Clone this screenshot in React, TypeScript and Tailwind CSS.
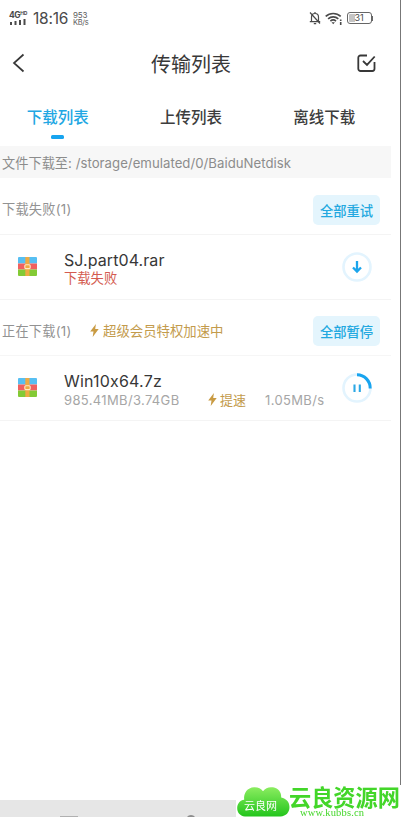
import type { ReactNode } from 'react';

const TABS = ['下载列表', '上传列表', '离线下载'];

function StatusBar() {
  return (
    <div className="flex h-9 items-center justify-between pl-[9px] pr-[18px] text-[#4a4a4a]">
      <div className="flex items-center">
        <div className="flex w-[19px] flex-col">
          <div className="flex h-[8px] items-start text-[8.5px] leading-[8px] font-bold tracking-[-0.4px]">
            4G<span className="text-[5px] leading-[5px] tracking-[-0.2px]">HD</span>
          </div>
          <svg className="h-[6px] w-[17px]" viewBox="0 0 17 6" fill="currentColor">
            <path d="M1 3h2v3H1zM5.500 2h2v4h-2zM10 1h2v5h-2zM14.500 0h2v6h-2z" />
          </svg>
        </div>
        <span className="ml-[5px] w-[37px] pt-px text-[15.5px] leading-5 tracking-[-0.2px] whitespace-nowrap">18:16</span>
        <div className="ml-[3px] w-[17px] text-[8px] leading-[8px] tracking-[-0.1px] text-[#5c5c5c]">
          <div>953</div>
          <div className="text-[7.5px] leading-[7px] tracking-[-0.3px]">KB/s</div>
        </div>
      </div>
      <div className="flex items-center">
        <svg className="h-[14px] w-[12px]" viewBox="0 0 12 14" fill="none" stroke="currentColor" strokeWidth="1.2">
          <path d="M2.500 10.500V6a3.500 3.500 0 0 1 7 0v4.500M.8 10.700h10.400M4.800 12.700h2.400M6 1v1.500M1 1.500l10 11" />
        </svg>
        <svg className="ml-[4px] h-[13px] w-[17px]" viewBox="0 0 17 13" fill="none" stroke="currentColor" strokeWidth="1.6">
          <path d="M.7 4.400a11 11 0 0 1 15 0M3.100 6.900a7.500 7.500 0 0 1 10.200 0M5.400 9.200a4.200 4.200 0 0 1 5.600 0" />
          <path d="M6.500 10.300h3.400l-1.700 2z" fill="currentColor" stroke="none" />
          <path d="M15.700 7.500v1.500M15.700 10v3" />
        </svg>
        <div className="ml-[5px] flex h-[12px] w-[25px] items-center rounded-[3px] border border-[#666] p-px">
          <div className="h-full w-[6px] rounded-l-[1px] bg-[#c5c5c5]" />
          <span className="text-[9px] leading-[8px]">31</span>
        </div>
        <div className="h-[5px] w-[1.5px] bg-[#666]" />
      </div>
    </div>
  );
}

function Bolt() {
  return (
    <svg className="h-[13px] w-[9px] shrink-0" viewBox="0 0 9 13" fill="#c99b43">
      <path d="M5.900 0L.2 7.400h3.300L2.700 13l6-7.900H5.200z" />
    </svg>
  );
}

function ArchiveIcon() {
  return (
    <svg className="mb-px ml-[18px] size-[19px] shrink-0" viewBox="0 0 19 19">
      <path fill="#57bff2" d="M1 0h17a1 1 0 0 1 1 1v5.500H0V1a1 1 0 0 1 1-1z" />
      <path fill="#f0605f" d="M0 6.500h19v6H0z" />
      <path fill="#83ca35" d="M0 12.500h19V18a1 1 0 0 1-1 1H1a1 1 0 0 1-1-1z" />
      <path fill="#eeaa42" d="M7.300 0h4.200v19H7.300z" />
      <rect x="6.800" y="7.800" width="5.400" height="3.800" rx="1" fill="#eeaa42" stroke="#ffe9c4" strokeWidth="1.1" />
    </svg>
  );
}

function SectionHeader({ title, action, children }: { title: string; action: string; children?: ReactNode }) {
  return (
    <div className="flex h-full items-center pl-[2px] pr-[11px] pt-[7px]">
      <span className="w-[88px] pt-px text-[13.2px] tracking-[0.25px] text-[#929292]">{title}</span>
      {children}
      <button className="ml-auto h-[30px] w-[67px] rounded-[5px] bg-[#e4f5fd] pt-px text-[13.3px] leading-[30px] font-medium text-[#22a8e0]">
        {action}
      </button>
    </div>
  );
}

function Watermark() {
  return (
    <div className="fixed top-[785px] left-[236px] flex h-8 w-[165px] bg-white">
      <div className="relative h-8 w-[53px] shrink-0">
        <svg className="h-8 w-[54px]" viewBox="0 0 54 32">
          <defs>
            <linearGradient id="cloud" x1="0" y1="0" x2="0" y2="1">
              <stop offset="0" stopColor="#8bed60" />
              <stop offset="1" stopColor="#23c51c" />
            </linearGradient>
          </defs>
          <path
            fill="url(#cloud)"
            d="M9 31.500C3.500 31 1 27 1.200 22.500c.2-4 3-7.200 7-7.700C7.300 8 11.500 2.500 18 2.200c4-.2 7 1.300 9 4 2.500-3.500 6-4.500 10-3.900 5.500.8 8.500 5 8.200 10.200 5 1 8.300 4.500 8.300 9.500 0 5.500-3.500 9-9 9.500z"
          />
        </svg>
        <span className="absolute top-[13px] left-[8px] font-['Liberation_Serif','Noto_Sans_CJK_SC',serif] text-[11px] leading-4 whitespace-nowrap text-white">
          云良网
        </span>
      </div>
      <div className="w-[112px] pt-[2px] text-[#43d629]">
        <div className="h-[21px] text-[22.2px] leading-[21px] font-bold whitespace-nowrap">云良资源网</div>
        <div className="ml-[11px] h-[9px] font-['Liberation_Serif',serif] text-[10.5px] leading-[9px] tracking-[0.15px]">
          www.kubbs.cn
        </div>
      </div>
    </div>
  );
}

export default function App() {
  return (
    <div className="flex h-[817px] w-[401px] flex-col overflow-hidden bg-white font-['Inter','Noto_Sans_CJK_SC',sans-serif] [font-feature-settings:'calt'_0]">
      <div className="h-[785px] w-[401px] border-r border-[#777]">
        <div className="w-[391px]">
          <StatusBar />

          <header className="flex h-[54px] items-center justify-between pl-[12px] pr-[15px] text-[#383838]">
            <svg className="h-[20px] w-[13px]" viewBox="0 0 13 20" fill="none" stroke="currentColor" strokeWidth="1.7">
              <path d="M11.500 1.500L2 10l9.500 8.500" />
            </svg>
            <h1 className="pt-[4px] text-[20px]">传输列表</h1>
            <svg className="h-[19px] w-[19px]" viewBox="0 0 19 19" fill="none" stroke="currentColor" strokeWidth="1.8">
              <path d="M10 1.500H3.500A2.200 2.200 0 0 0 1.300 3.700v11.100A2.200 2.200 0 0 0 3.500 17h11.800a2.200 2.200 0 0 0 2.200-2.200V8M6 7l4 3.900L17.700 2.500" />
            </svg>
          </header>

          <nav className="-ml-[9px] flex h-14 w-[400px]">
            {TABS.map((tab, i) => (
              <div
                key={tab}
                className={`flex flex-1 flex-col items-center pt-[16px] text-[15.5px] leading-[24px] font-medium ${i === 0 ? 'text-[#22a7e3]' : 'text-[#3d3d3d]'}`}
              >
                {tab}
                {i === 0 && <div className="mt-[5px] h-[4px] w-[13px] rounded-[1.5px] bg-[#18a4ef]" />}
              </div>
            ))}
          </nav>

          <div className="h-8 bg-[#f7f7f7] pl-[2px] text-[13.2px] leading-[34px] tracking-[0.03px] whitespace-nowrap text-[#8c8c8c]">
            文件下载至: /storage/emulated/0/BaiduNetdisk
          </div>

          <section className="h-[57px] border-b border-[#f4f4f4]">
            <SectionHeader title="下载失败(1)" action="全部重试" />
          </section>
          <div className="flex h-[65px] items-center border-b border-[#f4f4f4] pr-[19px]">
            <ArchiveIcon />
            <div className="ml-[27px] pt-[3px]">
              <div className="text-[16px] leading-[20px] tracking-[0.08px] text-[#373737]">SJ.part04.rar</div>
              <div className="text-[13.3px] leading-[17px] text-[#d45b50]">下载失败</div>
            </div>
            <svg className="ml-auto size-[30px]" viewBox="0 0 30 30" fill="none">
              <circle cx="15" cy="15" r="13.500" stroke="#e3f4fe" strokeWidth="2.6" />
              <path d="M15 9v10.500M11 15.500l4 4 4-4" stroke="#1ba5ec" strokeWidth="2.3" />
            </svg>
          </div>

          <section className="h-[56px] border-b border-[#f6f6f6]">
            <SectionHeader title="正在下载(1)" action="全部暂停">
              <div className="flex items-center gap-[4px] text-[13.4px] text-[#c39b4c]">
                <Bolt />
                超级会员特权加速中
              </div>
            </SectionHeader>
          </section>
          <div className="flex h-[65px] items-center border-b border-[#f4f4f4] pr-[19px]">
            <ArchiveIcon />
            <div className="ml-[27px] w-[261px] shrink-0 pt-[4px]">
              <div className="text-[16px] leading-[19px] tracking-[0.2px] text-[#373737]">Win10x64.7z</div>
              <div className="flex h-[18px] items-center text-[13px] leading-[18px] tracking-[0.35px] text-[#a6a6a6]">
                <span className="w-[144px]">985.41MB/3.74GB</span>
                <span className="flex w-[57px] items-center gap-[3px] tracking-normal text-[#c39b4c]">
                  <Bolt />
                  提速
                </span>
                <span>1.05MB/s</span>
              </div>
            </div>
            <svg className="ml-auto size-[30px] shrink-0" viewBox="0 0 30 30" fill="none">
              <circle cx="15" cy="15" r="13.500" stroke="#e3f4fe" strokeWidth="2.6" />
              <path d="M15 1.800A13.200 13.200 0 0 1 28.200 15.500" stroke="#18a4ef" strokeWidth="3" />
              <path d="M12.500 11.500v7.500M17.800 11.500v7.500" stroke="#2ba8e5" strokeWidth="2.1" />
            </svg>
          </div>
        </div>
      </div>

      {/* navigation bar, cut off by the lower screen edge */}
      <div className="mt-[15px] flex h-[17px] w-[236px] items-end bg-[#e6e6e6]">
        <div className="ml-[60px] h-px w-[18px] bg-[#b0b0b0]" />
        <svg className="ml-[109px] h-[2px] w-[8px]" viewBox="0 0 8 2" fill="#8d8d8d">
          <path d="M0 2C1 .7 2.300 0 4 0s3 .7 4 2z" />
        </svg>
      </div>
      <Watermark />
    </div>
  );
}
